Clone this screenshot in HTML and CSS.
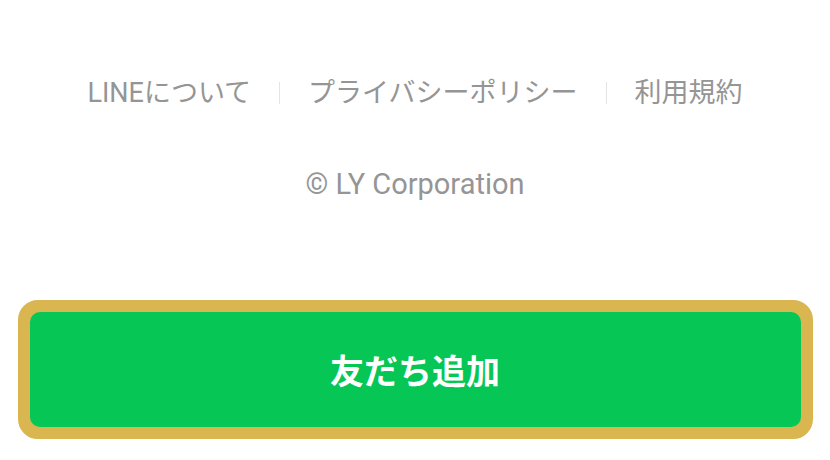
FILE: index.html
```html
<!DOCTYPE html>
<html lang="ja">
<head>
<meta charset="utf-8">
<link rel="stylesheet" href="styles.css">
</head>
<body>
<div class="page">
  <nav class="links">
    <a class="link">LINEについて</a>
    <span class="sep"></span>
    <a class="link">プライバシーポリシー</a>
    <span class="sep"></span>
    <a class="link">利用規約</a>
  </nav>
  <div class="copy">© LY Corporation</div>
  <div class="btn-wrap">
    <div class="btn">友だち追加</div>
  </div>
</div>
</body>
</html>
```
FILE: styles.css
```css
html, body {
  margin: 0;
  padding: 0;
  background: #ffffff;
}
.page {
  width: 830px;
  height: 460px;
  display: flex;
  flex-direction: column;
  align-items: center;
  font-family: Roboto, "Noto Sans CJK JP", sans-serif;
}
.links {
  margin-top: 74px;
  height: 38px;
  display: flex;
  align-items: center;
  gap: 28px;
}
.link {
  color: #959595;
  font-size: 27px;
  line-height: 38px;
  text-decoration: none;
}
.sep {
  width: 1px;
  height: 22px;
  background: #e4e4e4;
}
.copy {
  margin-top: 53px;
  color: #959595;
  font-size: 29px;
  line-height: 38px;
}
.btn-wrap {
  margin-top: 97px;
  width: 771px;
  height: 115px;
  border: 12px solid #d9b650;
  border-radius: 20px;
  background: #d9b650;
}
.btn {
  width: 100%;
  height: 100%;
  background: #06c755;
  border-radius: 10px;
  color: #ffffff;
  font-size: 34px;
  font-weight: 700;
  display: flex;
  align-items: center;
  justify-content: center;
}
```
